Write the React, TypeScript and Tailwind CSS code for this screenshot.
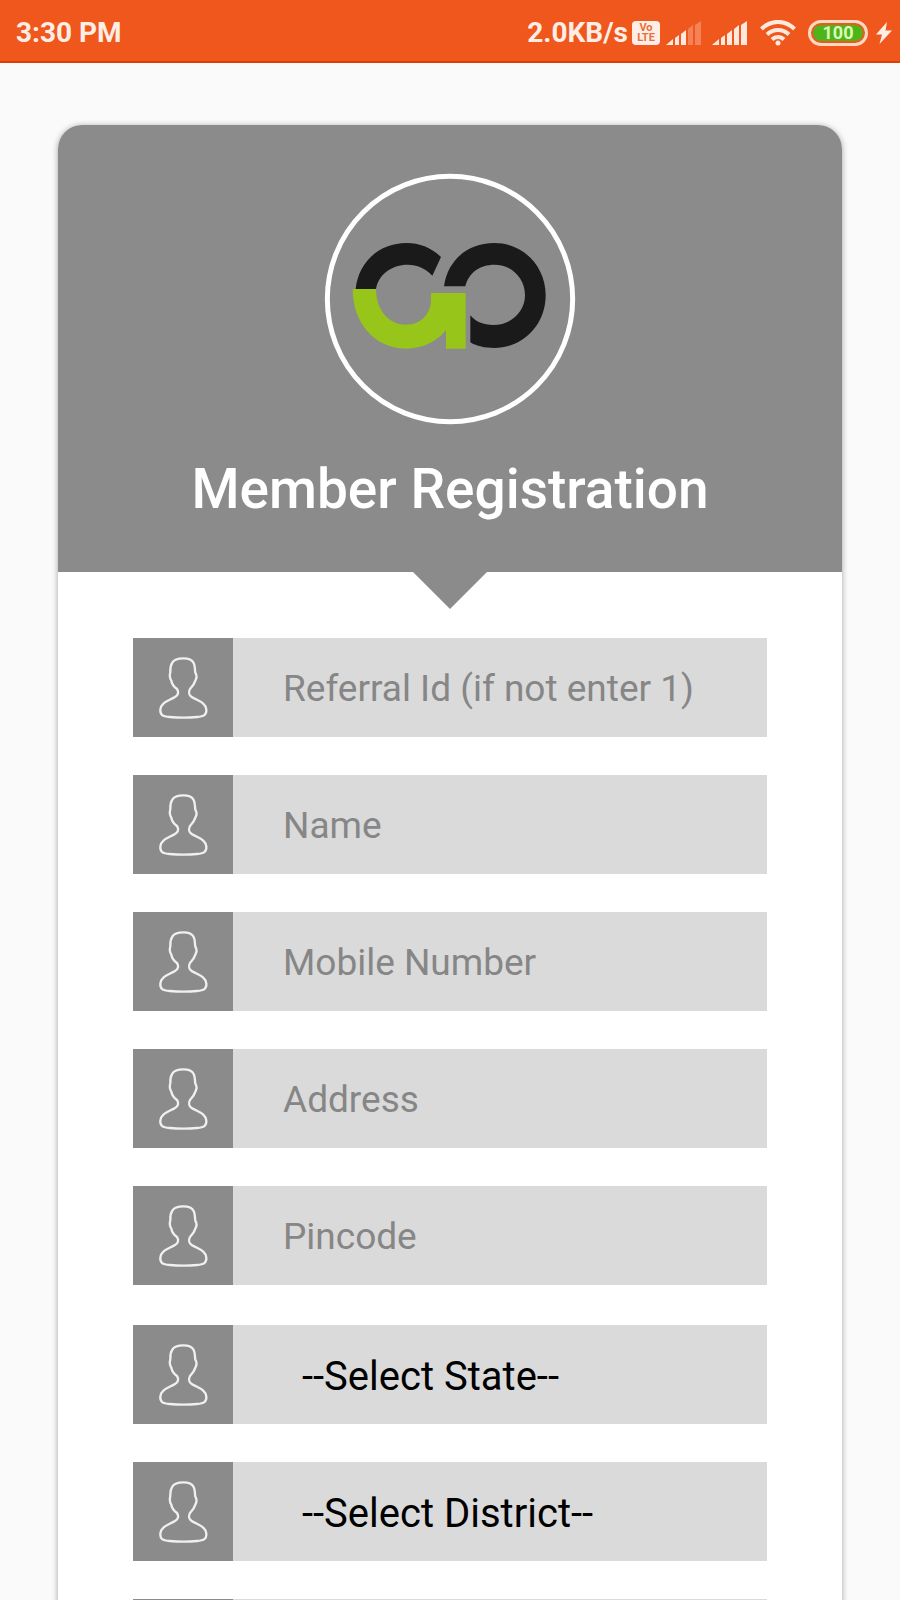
import { useState } from "react";

const textFields = [
  { id: "referral", placeholder: "Referral Id (if not enter 1)" },
  { id: "name", placeholder: "Name" },
  { id: "mobile", placeholder: "Mobile Number" },
  { id: "address", placeholder: "Address" },
  { id: "pincode", placeholder: "Pincode" },
];

const selectFields = [
  { id: "state", label: "State", placeholder: "--Select State--" },
  { id: "district", label: "District", placeholder: "--Select District--" },
];

function SignalIcon({ level }: { level: number }) {
  // slanted tops, so the bars form one ramp
  const bars = [
    "M0 24L7 18V24Z",
    "M9 24V17L13 14V24Z",
    "M15 24V13L20 9V24Z",
    "M22 24V8L27 4V24Z",
    "M29 24V4L35 0V24Z",
  ];

  return (
    <svg viewBox="0 0 36 24" className="h-6 w-9" fill="#ffe9df">
      {bars.map((d, i) => (
        <path key={d} d={d} opacity={i < level ? 1 : 0.3} />
      ))}
    </svg>
  );
}

function StatusBar() {
  return (
    <header className="flex h-[63px] items-center justify-between border-b-2 border-[#d8400a] bg-[#f0571c] pt-1 pr-2 pl-4 text-[#ffeee6]">
      <span className="text-[28px] font-bold">3:30 PM</span>
      <div className="flex items-center">
        <span className="text-[28px] font-bold">2.0KB/s</span>
        <span className="ml-1 flex h-6 w-7 flex-col items-center justify-center rounded bg-[#ffeee6] text-[11px] leading-[10px] font-bold text-[#e8703f]">
          <span>Vo</span>
          <span>LTE</span>
        </span>
        <div className="ml-1.5 flex gap-2.5">
          <SignalIcon level={3} />
          <SignalIcon level={5} />
        </div>
        <svg viewBox="0 0 36 26" className="ml-3 h-[26px] w-9" fill="none" stroke="#ffe9df" strokeWidth="4">
          <path d="M1.5 9C11-.5 25-.5 34.500 9" />
          <path d="M7 14.500C13.500 8.500 22.500 8.500 29 14.500" />
          <path d="M12 19.500C15.500 16 20.500 16 24 19.500" />
          <circle cx="18" cy="23" r="2.500" fill="#ffe9df" stroke="none" />
        </svg>
        <span className="ml-3 flex h-[26px] w-[60px] rounded-full border-3 border-[#ffd9c4] p-[2px]">
          <span className="flex flex-1 items-center justify-center rounded-full bg-[#4fb41a] text-[18px] leading-none font-bold text-[#d9fbb5]">
            100
          </span>
        </span>
        <svg viewBox="0 0 16 22" className="ml-2 h-[22px] w-4" fill="#ffeee6">
          <path d="M11 0 0 12.500h6L3.500 22 16 8.500H9.500z" />
        </svg>
      </div>
    </header>
  );
}

function Logo() {
  return (
    <svg viewBox="42 40 756 756" className="size-[252px]">
      <circle cx="420" cy="418" r="368" fill="none" stroke="#fff" strokeWidth="15" />
      <path
        fill="#1a1a1a"
        d="M137 388C145 310 205 250 290 250C330 250 365 265 393 292L367 348C345 325 322 315 293 315C245 315 205 345 198 388Z"
      />
      <path
        fill="#97c51a"
        d="M128 388H198C198 450 235 495 288 495C335 495 363 460 363 420V400H467V567H408V512C380 545 340 567 288 567C195 567 128 490 128 388Z"
      />
      <path
        fill="#1a1a1a"
        d="M402 380C412 305 470 250 553 250C640 250 707 320 707 407C707 495 640 565 553 565C525 565 500 560 481 548V467C497 487 520 496 550 496C605 496 645 455 645 407C645 355 605 315 553 315C510 315 475 340 466 380Z"
      />
    </svg>
  );
}

function UserIcon() {
  return (
    <span className="flex w-[100px] shrink-0 items-center justify-center bg-[#8b8b8b]">
      <svg viewBox="0 0 300 300" className="size-[100px]" fill="none" stroke="#f0f0f0" strokeWidth="7">
        <path d="M151 61C168 61 177 64 182 75C187 85 185 94 187 104C192 112 191 121 187 128C184 139 177 147 171 153C166 162 168 172 176 177C196 189 219 194 220 215C221 231 213 235 192 237Q151 241 110 237C88 235 81 231 82 215C83 194 106 189 126 177C136 172 138 162 132 153C124 147 117 139 115 128C110 121 110 110 112 102C111 87 114 80 118 74C124 63 134 61 151 61Z" />
      </svg>
    </span>
  );
}

export default function App() {
  const [values, setValues] = useState<Record<string, string>>({});

  const handleChange = (id: string, value: string) => {
    setValues((prev) => ({ ...prev, [id]: value }));
  };

  return (
    <div className="min-h-screen bg-[#fafafa] font-[Roboto,sans-serif]">
      <StatusBar />

      <main className="mx-[58px] mt-[62px] rounded-t-3xl bg-white shadow-[0_1px_6px_rgba(0,0,0,0.35)]">
        {/* Card header */}
        <div className="relative flex h-[447px] flex-col items-center rounded-t-3xl bg-[#8b8b8b] pt-12">
          <Logo />
          <h1 className="mt-8 text-[55px] leading-[64px] font-medium text-white">Member Registration</h1>
          <svg viewBox="0 0 74 37" className="absolute top-full left-1/2 h-[37px] w-[74px] -translate-x-1/2" fill="#8b8b8b">
            <path d="M0 0H74L37 37z" />
          </svg>
        </div>

        <form className="flex flex-col gap-10 px-[75px] pt-[66px] pb-16">
          <div className="flex flex-col gap-[38px]">
            {textFields.map((field) => (
              <label key={field.id} className="flex h-[99px] bg-[#dadada]">
                <UserIcon />
                <input
                  type="text"
                  name={field.id}
                  aria-label={field.placeholder}
                  placeholder={field.placeholder}
                  value={values[field.id] ?? ""}
                  onChange={(e) => handleChange(field.id, e.target.value)}
                  className="min-w-0 flex-1 bg-transparent pt-0.5 pl-[50px] text-[37px] text-black outline-none placeholder:text-[#868686]"
                />
              </label>
            ))}
          </div>

          <div className="flex flex-col gap-[38px]">
            {selectFields.map((field) => (
              <label key={field.id} className="flex h-[99px] bg-[#dadada]">
                <UserIcon />
                <select
                  name={field.id}
                  aria-label={field.label}
                  value={values[field.id] ?? ""}
                  onChange={(e) => handleChange(field.id, e.target.value)}
                  className="min-w-0 flex-1 appearance-none bg-transparent pt-1 pl-[69px] text-[40px] text-black outline-none"
                >
                  <option value="">{field.placeholder}</option>
                </select>
              </label>
            ))}
            <label className="flex h-[99px] bg-[#dadada]">
              <UserIcon />
              <input
                type="text"
                name="city"
                aria-label="City"
                value={values.city ?? ""}
                onChange={(e) => handleChange("city", e.target.value)}
                className="min-w-0 flex-1 bg-transparent pt-0.5 pl-[50px] text-[37px] text-black outline-none"
              />
            </label>
          </div>
        </form>
      </main>
    </div>
  );
}
